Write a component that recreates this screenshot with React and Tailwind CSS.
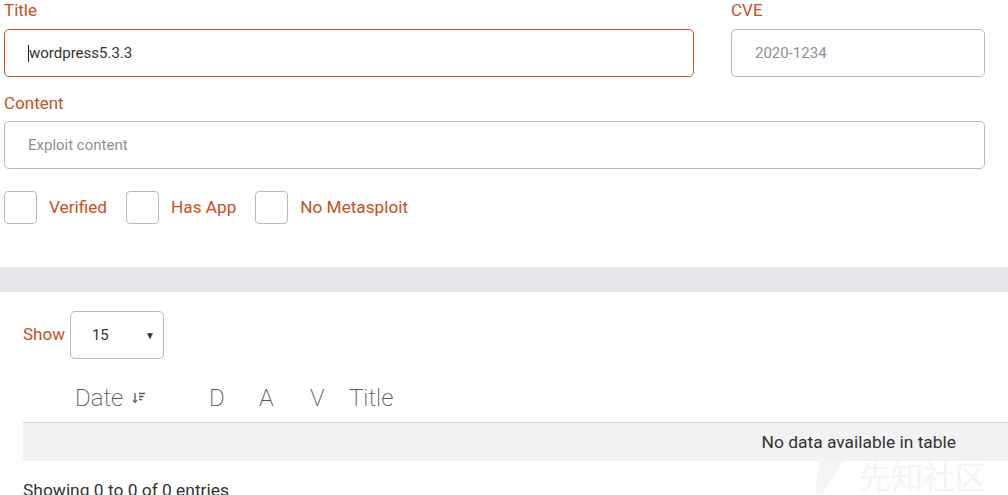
import React from 'react';

const orange = 'text-[#c8501e]';

const Checkbox = ({ label }) => (
  <label className="flex items-center gap-3 cursor-pointer">
    <span className="w-[33px] h-[33px] rounded-[4px] border border-[#b6bbc1] bg-white" />
    <span className={`text-[17.2px] ${orange}`}>{label}</span>
  </label>
);

const App = () => {
  return (
    <div className="relative w-[1008px] h-[495px] overflow-hidden bg-white font-['Roboto',sans-serif]">
      {/* search form */}
      <div className="pl-[4px] pr-[23px] pt-0">
        <div className="flex gap-[37px]">
          <div className="w-[690px]">
            <div className={`text-[17px] leading-[20px] h-[29px] ${orange}`}>Title</div>
            <div className="h-[48px] rounded-[5px] border border-[#c8501e] flex items-center pl-[23px] text-[15px] text-[#333]">
              <span className="w-px h-[17px] bg-[#222]" />
              wordpress5.3.3
            </div>
          </div>
          <div className="flex-1">
            <div className={`text-[17px] leading-[20px] h-[29px] ${orange}`}>CVE</div>
            <div className="h-[48px] rounded-[5px] border border-[#b6bbc1] flex items-center pl-[23px] text-[15px] text-[#8a8f96]">
              2020-1234
            </div>
          </div>
        </div>
        <div className={`mt-[16px] text-[17px] leading-[20px] h-[28px] ${orange}`}>Content</div>
        <div className="h-[48px] rounded-[5px] border border-[#b6bbc1] flex items-center pl-[23px] text-[15px] text-[#8a8f96]">
          Exploit content
        </div>
        <div className="mt-[22px] flex gap-[19px]">
          <Checkbox label="Verified" />
          <Checkbox label="Has App" />
          <Checkbox label="No Metasploit" />
        </div>
      </div>

      {/* separator band */}
      <div className="mt-[43px] h-[25px] bg-[#e5e6ea]" />

      {/* table area */}
      <div className="pl-[23px]">
        <div className="mt-[19px] flex items-center gap-[5px]">
          <span className={`text-[17px] ${orange}`}>Show</span>
          <div className="w-[94px] h-[48px] rounded-[5px] border border-[#b6bbc1] flex items-center justify-between pl-[21px] pr-[8px] text-[15px] text-[#333]">
            <span>15</span>
            <span className="text-[10px] text-[#333]">▼</span>
          </div>
        </div>

        <div className="mt-[14px] h-[49px] flex items-center text-[24px] font-extralight text-[#555]">
          <div className="w-[186px] pl-[52px] flex items-center gap-[9px]">
            <span>Date</span>
            <svg width="14" height="12" viewBox="0 0 14 12" className="mt-[1px]">
              <path d="M3 1v9" stroke="#555" strokeWidth="1.3" />
              <path d="M1 8l2 2.5L5 8" stroke="#555" strokeWidth="1.2" fill="none" />
              <path d="M7 1.5h6M7 4.5h4.5M7 7.5h3" stroke="#555" strokeWidth="1.3" />
            </svg>
          </div>
          <span className="w-[50px]">D</span>
          <span className="w-[51px]">A</span>
          <span className="w-[39px]">V</span>
          <span>Title</span>
        </div>

        <div className="h-[39px] bg-[#f2f2f2] border-t border-[#dcdde2] flex items-center justify-end pr-[52px] text-[17.4px] text-[#333]">
          No data available in table
        </div>

        <div className="mt-[16px] text-[17.4px] text-[#333]">Showing 0 to 0 of 0 entries</div>
      </div>

      {/* watermark */}
      <div className="absolute left-[813px] top-[455px] flex items-center gap-[8px] pointer-events-none">
        <svg width="38" height="40" viewBox="0 0 38 40">
          <path d="M6 4h26L10 38H2z" fill="#f5f5f5" />
        </svg>
        <span className="text-[32px] leading-none text-[#f4f4f4] font-['Noto_Sans_CJK_SC',sans-serif]">先知社区</span>
      </div>
    </div>
  );
};

export default App;
